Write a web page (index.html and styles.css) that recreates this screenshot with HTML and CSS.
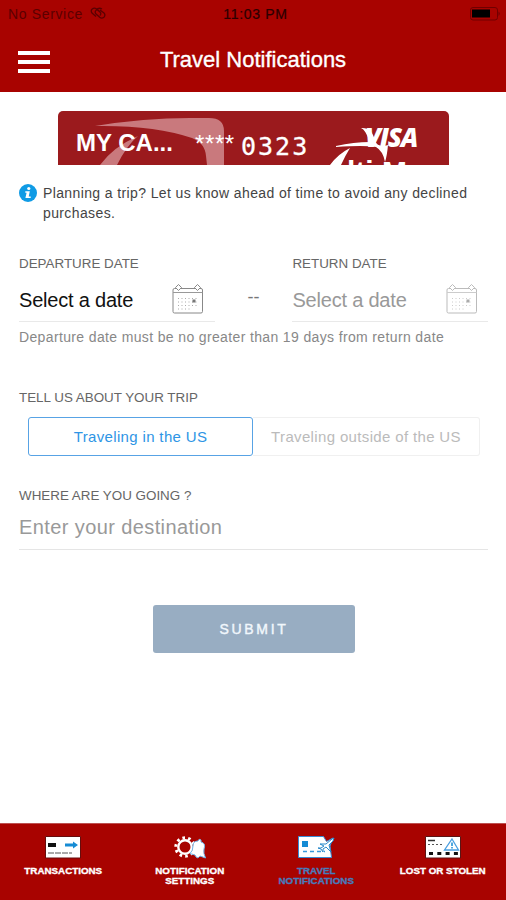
FILE: index.html
```html
<!DOCTYPE html>
<html lang="en">
<head>
<meta charset="utf-8">
<title>Travel Notifications</title>
<link rel="stylesheet" href="styles.css">
</head>
<body>
<header class="header">
  <div class="status">
    <div class="carrier"><span>No Service</span>
      <svg width="16" height="13" viewBox="0 0 16 13" fill="none" stroke="currentColor" stroke-width="1.3"><path d="M6 9.5L2 6.1Q.5 4 2 2.2Q4.3.2 6.3 1.7L10.5 5.5Q11.3 7.3 9.8 8.6M10 3L14 6Q15.8 8 14 10.2Q11.7 12 9.7 10.3L5.8 6.8Q4.5 4.9 6 3.4Q8.5 0 12 2"/></svg>
    </div>
    <span class="time">11:03 PM</span>
    <svg class="battery" width="31" height="14" viewBox="0 0 31 14"><rect x=".5" y=".5" width="27" height="12.5" rx="2.5" fill="none" stroke="#700000"/><rect x="2" y="2.5" width="18" height="8" fill="#000"/><path d="M28.5 4.5Q31 6.7 28.5 9z" fill="#700000"/></svg>
  </div>
  <div class="bar">
    <div class="menu"><i></i><i></i><i></i></div>
    <h1>Travel Notifications</h1>
  </div>
</header>
<main>
  <section class="card">
    <svg class="card-art" width="391" height="54" viewBox="0 0 391 54">
      <path d="M37 15Q86 7 132 7L151 7Q166 7 166 20L166 54H149L148 45Q147 32 134 27Q96 14 37 15ZM42 54Q55 36 80 25Q69 34 59 54Z" fill="#c9797d"/>
      <path d="M278 35Q296 31 312 31Q307 18 303 17Q314 16 317 30Q320 37 330 34Q329 45 327 51Q325 40 318 36Q306 34 278 36Z" fill="#fff"/>
      <path d="M272 54Q280 43 292 37Q287 45 283 54Z" fill="#fff"/>
    </svg>
    <span class="card-name">MY CA...</span><span class="stars">****</span><span class="digits">0323</span>
    <span class="visa">VISA</span><span class="product">lti&nbsp;M</span>
  </section>
  <p class="info">
    <svg width="18" height="18" viewBox="0 0 18 18"><circle cx="9" cy="9" r="9" fill="#109be5"/><circle cx="9.8" cy="4.5" r="1.6" fill="#fff"/><path d="M6.3 7.2h4.5L9.7 12.5h2v1.5H6.4L7.6 8.7H6.3z" fill="#fff"/></svg>
    <span>Planning a trip? Let us know ahead of time to avoid any declined<br>purchases.</span>
  </p>
  <section class="dates">
    <div class="date">
      <label>DEPARTURE DATE</label>
      <div class="field"><span>Select a date</span>
        <svg width="32" height="31" viewBox="0 0 32 31" fill="none" stroke="#888"><rect x="1" y="5.5" width="29.5" height="24.5" rx="1.5"/><path d="M1 9.5h29.5" stroke="#999"/><path d="M6.5 1.5L9.5 4.5L6.5 7.5L3.5 4.5zM25.5 1.5L28.5 4.5L25.5 7.5L22.5 4.5z" fill="#fff"/><path d="M6 15.5h21M6 19h21M6 22.5h21M6 26h14" stroke="#aaa" stroke-dasharray="1 2.5"/><path d="M20.5 16.5h3v3h-3z" fill="#777" stroke="none"/></svg>
      </div>
    </div>
    <span class="dash">--</span>
    <div class="date muted">
      <label>RETURN DATE</label>
      <div class="field"><span>Select a date</span>
        <svg width="32" height="31" viewBox="0 0 32 31" fill="none" stroke="#bbb"><rect x="1" y="5.5" width="29.5" height="24.5" rx="1.5"/><path d="M1 9.5h29.5" stroke="#ccc"/><path d="M6.5 1.5L9.5 4.5L6.5 7.5L3.5 4.5zM25.5 1.5L28.5 4.5L25.5 7.5L22.5 4.5z" fill="#fff"/><path d="M6 15.5h21M6 19h21M6 22.5h21M6 26h14" stroke="#ccc" stroke-dasharray="1 2.5"/><path d="M20.5 16.5h3v3h-3z" fill="#aaa" stroke="none"/></svg>
      </div>
    </div>
  </section>
  <p class="hint">Departure date must be no greater than 19 days from return date</p>
  <label class="trip-label">TELL US ABOUT YOUR TRIP</label>
  <div class="choices">
    <button class="choice selected">Traveling in the US</button>
    <button class="choice">Traveling outside of the US</button>
  </div>
  <label class="where-label">WHERE ARE YOU GOING ?</label>
  <div class="destination">Enter your destination</div>
  <button class="submit">SUBMIT</button>
</main>
<nav class="tabs">
  <div class="tab">
    <svg width="36" height="23" viewBox="0 0 36 23"><path d="M.5.5h35v21.5H.5z" fill="#fff" stroke="#660d0d"/><path d="M3 7h8v4H3z" fill="#111"/><path d="M20 7.5h8V5.5l5 3.5-5 3.5v-2h-8z" fill="#168bd4"/><path d="M3 17h24" stroke="#555" stroke-dasharray="6 1"/></svg>
    <span>TRANSACTIONS</span>
  </div>
  <div class="tab">
    <svg width="36" height="23" viewBox="0 0 36 23"><circle cx="13" cy="11" r="9.2" fill="none" stroke="#fff" stroke-width="3" stroke-dasharray="2.6 3.18"/><circle cx="13" cy="11" r="6.7" fill="none" stroke="#fff" stroke-width="2.4"/><path d="M18 17.5Q21 15 21 10Q21 5 26 5Q27 2 29 4V6Q34 7 32 13Q31 17 33.5 22L28 20Q25 24 23 19Z" fill="#fff" stroke="#72b7eb"/></svg>
    <span>NOTIFICATION<br>SETTINGS</span>
  </div>
  <div class="tab active">
    <svg width="38" height="23" viewBox="0 0 38 23"><path d="M1.5.5h25l3 5L36 2l-3 8 1.5 11.5h-33z" fill="#fff" stroke="#398bd4"/><path d="M5 5h6v6H5z" fill="#168bd4"/><path d="M6 15.5h22" stroke="#3999dc" stroke-width="1.5" stroke-dasharray="4 3"/><path d="M23 8l6 0 6-5 2-1-1 3-4 4 2 7-5-5-3 2v3l-2-3-3-1h3l3-2z" fill="#fff" stroke="#2788ca"/></svg>
    <span>TRAVEL<br>NOTIFICATIONS</span>
  </div>
  <div class="tab">
    <svg width="36" height="23" viewBox="0 0 36 23"><path d="M.5.5h35v21.5H.5z" fill="#fff" stroke="#5a1515"/><path d="M3 4.5h7" stroke="#333" stroke-width="1.5"/><path d="M3 8.5h15" stroke="#555" stroke-dasharray="2 2"/><path d="M4 17.5h29" stroke="#111" stroke-width="3" stroke-dasharray="4 4.3"/><path d="M27 3L33.5 14h-14z" fill="#fff" stroke="#4a9fe0" stroke-width="1.3"/><path d="M27 6.5v3.5M27 11v1.5" stroke="#168bd4" stroke-width="1.5"/></svg>
    <span>LOST OR STOLEN</span>
  </div>
</nav>
</body>
</html>
```
FILE: styles.css
```css
* { box-sizing: border-box; }
body { margin: 0; width: 506px; height: 900px; display: flex; flex-direction: column; overflow: hidden; background: #fff; font-family: "Liberation Sans", Arial, sans-serif; color: #333; }
svg { display: block; flex: none; }
h1, p { margin: 0; font-weight: 400; }
button { font-family: inherit; margin: 0; padding: 0; }

.header { height: 92px; background: #a80300; flex: none; }
.status { height: 27px; padding: 0 5px 0 8px; display: grid; grid-template-columns: 1fr auto 1fr; align-items: center; color: #5b0000; font-size: 14px; }
.carrier { display: flex; align-items: center; gap: 7px; letter-spacing: .65px; }
.time { color: #2b0000; letter-spacing: .7px; margin-left: 2px; -webkit-text-stroke: .2px #2b0000; }
.battery { justify-self: end; }
.bar { height: 65px; padding: 0 18px; display: grid; grid-template-columns: 32px 1fr 32px; align-items: center; }
.menu { display: flex; flex-direction: column; gap: 5px; margin-top: 4px; }
.menu i { height: 4px; background: #fff; }
h1 { text-align: center; color: #fff; font-size: 22px; line-height: 24px; margin-top: 0; -webkit-text-stroke: .35px #fff; }

main { flex: 1; padding: 19px 18px 0 19px; }
.card { position: relative; width: 391px; height: 54px; margin-left: 39px; padding-left: 18px; overflow: hidden; background: #9b1a1d; border-radius: 5px 5px 0 0; color: #fff; display: flex; align-items: center; }
.card-art { position: absolute; left: 0; top: 0; }
.card span { position: relative; white-space: nowrap; }
.card-name { width: 119px; font-size: 24px; font-weight: 700; top: 5px; }
.stars { width: 46px; font-size: 24px; top: 6px; letter-spacing: .6px; }
.digits { width: 92px; font: 25px "DejaVu Sans Mono", monospace; letter-spacing: 2px; top: 8px; -webkit-text-stroke: .3px #fff; }
.card .visa { position: absolute; left: 307px; top: 12px; font: italic 800 26px/28px "Open Sans", sans-serif; letter-spacing: -1.2px; }
.card .product { position: absolute; left: 289px; top: 45px; font-size: 30px; line-height: 32px; font-weight: 700; }

.info { display: flex; gap: 6px; margin-top: 19px; font-size: 14px; line-height: 20px; letter-spacing: .38px; color: #444; white-space: nowrap; }
.info span { margin-top: -1px; }
.dates { display: flex; margin-top: 33px; }
.date { width: 196px; }
label { display: block; font-size: 13.4px; line-height: 16px; color: #666; white-space: nowrap; }
.field { height: 50px; border-bottom: 1px solid #e9e9e9; display: flex; align-items: center; justify-content: space-between; padding-right: 11px; font-size: 20px; letter-spacing: -.2px; color: #111; }
.field span { margin-top: 7px; }
.field svg { margin-top: 3px; }
.muted .field { color: #999; padding-right: 10px; }
.dash { width: 78px; text-align: center; padding-top: 31px; color: #777; font-size: 18px; }
.hint { margin-top: 5px; font-size: 14px; line-height: 20px; letter-spacing: .36px; color: #888; white-space: nowrap; }
.trip-label { margin-top: 43px; }
.choices { display: flex; width: 452px; height: 39px; margin: 11px 0 0 9px; }
.choice { width: 227px; border: 1px solid #f0f0f0; border-left: 0; border-radius: 0 3px 3px 0; background: #fff; color: #bbb; font-size: 15px; letter-spacing: .35px; }
.selected { width: 225px; border: 1px solid #58a3e5; border-radius: 3px; color: #2e95e5; }
.where-label { margin-top: 32px; }
.destination { height: 46px; border-bottom: 1px solid #e5e5e5; font-size: 20px; line-height: 47px; letter-spacing: .4px; color: #999; }
.submit { display: block; width: 202px; height: 48px; margin: 55px 0 0 134px; border: 0; border-radius: 3px; background: #98adc2; color: #f1f7fc; font-size: 14px; letter-spacing: 2.7px; -webkit-text-stroke: .4px #f1f7fc; }

.tabs { height: 77px; flex: none; background: #a80300; border-top: 1px solid #bd5050; display: grid; grid-template-columns: repeat(4, 1fr); }
.tab { display: flex; flex-direction: column; align-items: center; padding-top: 12px; gap: 7px; color: #fff; font-size: 9.8px; line-height: 10px; font-weight: 700; text-align: center; white-space: nowrap; -webkit-text-stroke: .35px currentColor; }
.active { color: #477bbc; }
```
